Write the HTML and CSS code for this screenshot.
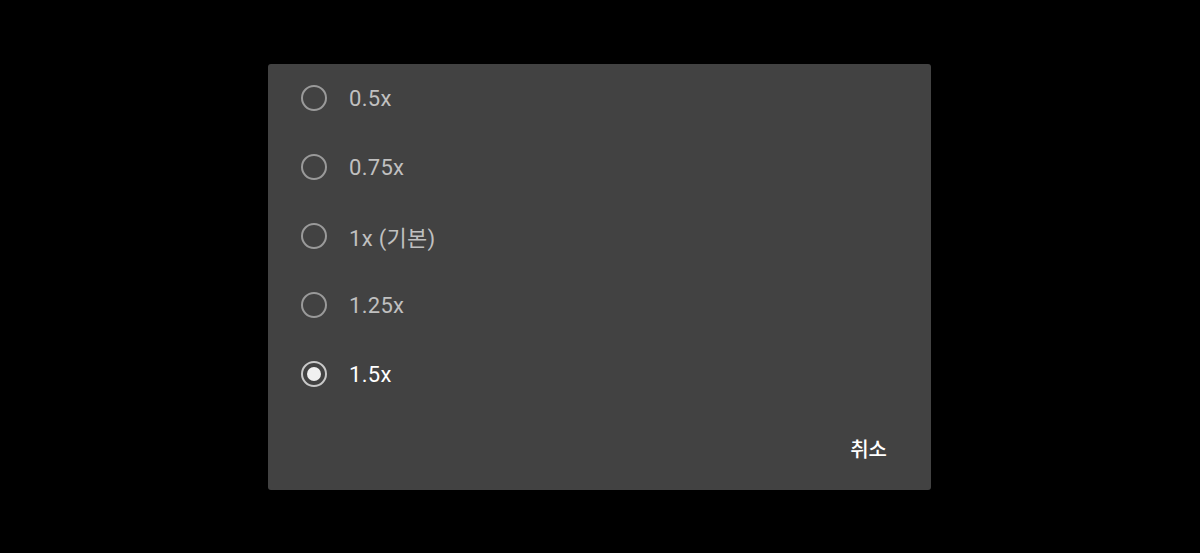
FILE: index.html
```html
<!DOCTYPE html>
<html lang="ko">
<head>
<meta charset="utf-8">
<link rel="stylesheet" href="styles.css">
</head>
<body>
<div class="dialog">
  <ul class="options">
    <li class="option"><span class="radio"></span><span class="label">0.5x</span></li>
    <li class="option"><span class="radio"></span><span class="label">0.75x</span></li>
    <li class="option"><span class="radio"></span><span class="label">1x (기본)</span></li>
    <li class="option"><span class="radio"></span><span class="label">1.25x</span></li>
    <li class="option selected"><span class="radio"></span><span class="label">1.5x</span></li>
  </ul>
  <div class="actions"><span class="cancel">취소</span></div>
</div>
</body>
</html>
```
FILE: styles.css
```css
html, body {
  margin: 0;
  padding: 0;
  height: 100%;
  background: #000;
}
body {
  display: flex;
  align-items: center;
  justify-content: center;
  font-family: Roboto, "Noto Sans CJK KR", sans-serif;
}
.dialog {
  width: 663px;
  height: 426px;
  margin-right: 1px;
  background: #424242;
  border-radius: 3px;
  display: flex;
  flex-direction: column;
  box-sizing: border-box;
}
.options {
  list-style: none;
  margin: 0;
  padding: 0;
}
.option {
  height: 69px;
  display: flex;
  align-items: center;
  padding-left: 33px;
}
.radio {
  width: 26px;
  height: 26px;
  box-sizing: border-box;
  border: 2px solid #9a9a9a;
  border-radius: 50%;
  display: flex;
  align-items: center;
  justify-content: center;
  flex: none;
}
.label {
  margin-left: 22px;
  font-size: 22px;
  color: #c0c0c0;
  letter-spacing: 0.3px;
}
.selected .radio {
  border-color: #c8c8c8;
}
.selected .radio::after {
  content: "";
  width: 14px;
  height: 14px;
  border-radius: 50%;
  background: #f0f0f0;
}
.selected .label {
  color: #fff;
}
.actions {
  flex: 1;
  display: flex;
  justify-content: flex-end;
  align-items: center;
  padding-right: 44px;
  padding-bottom: 2px;
}
.cancel {
  font-family: "Noto Sans CJK KR", sans-serif;
  font-size: 20px;
  font-weight: 500;
  color: #fff;
}
```
